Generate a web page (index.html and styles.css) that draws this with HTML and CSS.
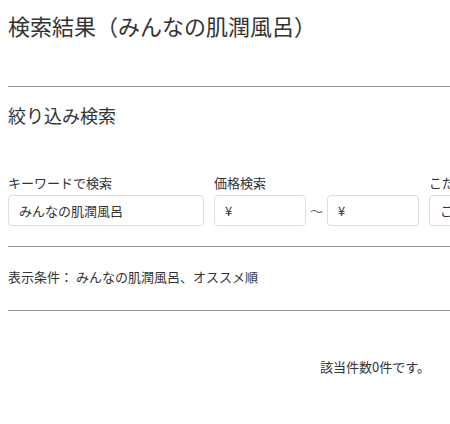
FILE: index.html
```html
<html>
    <head>
        <title>検索結果</title>
        <link rel="stylesheet" href="styles.css">
    </head>
    <body>
        <div class="page">
            <h1 class="title">検索結果（みんなの肌潤風呂）</h1>
            <hr class="line">

            <h2 class="sub">絞り込み検索</h2>
            <form class="filters">
                <div class="field">
                    <label for="kw">キーワードで検索</label>
                    <input type="text" id="kw" class="input kw" value="みんなの肌潤風呂">
                </div>
                <div class="field">
                    <label for="pmin">価格検索</label>
                    <div class="price">
                        <input type="text" id="pmin" class="input price-box" value="¥">
                        <span class="tilde">～</span>
                        <input type="text" id="pmax" class="input price-box" value="¥">
                    </div>
                </div>
                <div class="field">
                    <label for="kodawari">こだわり条件</label>
                    <input type="text" id="kodawari" class="input kw" value="こだわり">
                </div>
            </form>
            <hr class="line">

            <p class="cond">表示条件： みんなの肌潤風呂、オススメ順</p>
            <hr class="line">

            <div class="result">
                <p class="count">該当件数0件です。</p>
            </div>
        </div>
    </body>
</html>
```

FILE: styles.css
```css
html {
    overflow: hidden;
}

body {
    margin: 8px 0 0 8px;
    font-family: "Noto Sans CJK JP", "Noto Sans", sans-serif;
    color: #333;
    background-color: white;
}

.page {
    width: 600px;
}

.title {
    margin: 0;
    padding-top: 2px;
    font-size: 22px;
    font-weight: normal;
    line-height: 30px;
}

.line {
    margin: 0;
    border: none;
    border-top: 1px solid #999;
}

.title + .line {
    margin-top: 46px;
}

.sub {
    margin: 16px 0 0 0;
    font-size: 18px;
    font-weight: normal;
    line-height: 24px;
}

.filters {
    display: flex;
    gap: 10px;
    margin: 47px 0 20px 0;
}

.field {
    display: flex;
    flex-direction: column;
    gap: 3px;
}

.field label {
    font-size: 13px;
    line-height: 18px;
}

.input {
    box-sizing: border-box;
    height: 31px;
    padding: 0 10px;
    border: 1px solid #ddd;
    border-radius: 4px;
    font-family: inherit;
    font-size: 13px;
    color: #333;
    outline: none;
}

.kw {
    width: 196px;
}

.price {
    display: flex;
    align-items: center;
}

.price-box {
    width: 92px;
}

.tilde {
    width: 21px;
    text-align: center;
    font-size: 13px;
    color: #666;
}

.cond {
    margin: 0;
    padding: 21px 0 24px 0;
    font-size: 13px;
    line-height: 18px;
}

.result {
    width: 422px;
    text-align: right;
}

.count {
    margin: 47px 0 0 0;
    font-size: 13px;
    line-height: 18px;
}
```
